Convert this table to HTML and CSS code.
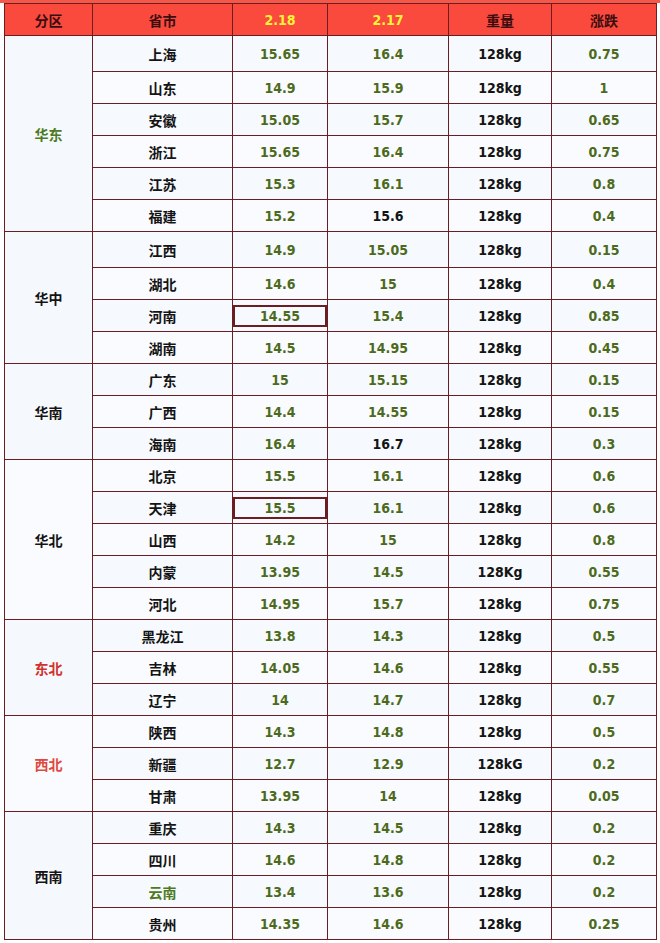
FILE: index.html
```html
<!DOCTYPE html>
<html lang="zh">
<head>
<meta charset="utf-8">
<link rel="stylesheet" href="styles.css">
</head>
<body>
<div class="topbar"></div>
<table class="price">
<colgroup>
<col class="c1"><col class="c2"><col class="c3"><col class="c4"><col class="c5"><col class="c6">
</colgroup>
<thead>
<tr class="head">
<th>分区</th><th>省市</th><th class="date">2.18</th><th class="date">2.17</th><th>重量</th><th>涨跌</th>
</tr>
</thead>
<tbody>
<tr class="tall"><td class="region green" rowspan="6">华东</td><td class="prov">上海</td><td class="num">15.65</td><td class="num">16.4</td><td class="wt">128kg</td><td class="num">0.75</td></tr>
<tr><td class="prov">山东</td><td class="num">14.9</td><td class="num">15.9</td><td class="wt">128kg</td><td class="num">1</td></tr>
<tr><td class="prov">安徽</td><td class="num">15.05</td><td class="num">15.7</td><td class="wt">128kg</td><td class="num">0.65</td></tr>
<tr><td class="prov">浙江</td><td class="num">15.65</td><td class="num">16.4</td><td class="wt">128kg</td><td class="num">0.75</td></tr>
<tr><td class="prov">江苏</td><td class="num">15.3</td><td class="num">16.1</td><td class="wt">128kg</td><td class="num">0.8</td></tr>
<tr><td class="prov">福建</td><td class="num">15.2</td><td class="wt">15.6</td><td class="wt">128kg</td><td class="num">0.4</td></tr>

<tr class="tall"><td class="region" rowspan="4">华中</td><td class="prov">江西</td><td class="num">14.9</td><td class="num">15.05</td><td class="wt">128kg</td><td class="num">0.15</td></tr>
<tr><td class="prov">湖北</td><td class="num">14.6</td><td class="num">15</td><td class="wt">128kg</td><td class="num">0.4</td></tr>
<tr><td class="prov">河南</td><td class="num boxed"><div class="box">14.55</div></td><td class="num">15.4</td><td class="wt">128kg</td><td class="num">0.85</td></tr>
<tr><td class="prov">湖南</td><td class="num">14.5</td><td class="num">14.95</td><td class="wt">128kg</td><td class="num">0.45</td></tr>

<tr><td class="region" rowspan="3">华南</td><td class="prov">广东</td><td class="num">15</td><td class="num">15.15</td><td class="wt">128kg</td><td class="num">0.15</td></tr>
<tr><td class="prov">广西</td><td class="num">14.4</td><td class="num">14.55</td><td class="wt">128kg</td><td class="num">0.15</td></tr>
<tr><td class="prov">海南</td><td class="num">16.4</td><td class="wt">16.7</td><td class="wt">128kg</td><td class="num">0.3</td></tr>

<tr><td class="region" rowspan="5">华北</td><td class="prov">北京</td><td class="num">15.5</td><td class="num">16.1</td><td class="wt">128kg</td><td class="num">0.6</td></tr>
<tr><td class="prov">天津</td><td class="num boxed"><div class="box">15.5</div></td><td class="num">16.1</td><td class="wt">128kg</td><td class="num">0.6</td></tr>
<tr><td class="prov">山西</td><td class="num">14.2</td><td class="num">15</td><td class="wt">128kg</td><td class="num">0.8</td></tr>
<tr><td class="prov">内蒙</td><td class="num">13.95</td><td class="num">14.5</td><td class="wt">128Kg</td><td class="num">0.55</td></tr>
<tr><td class="prov">河北</td><td class="num">14.95</td><td class="num">15.7</td><td class="wt">128kg</td><td class="num">0.75</td></tr>

<tr><td class="region red" rowspan="3">东北</td><td class="prov">黑龙江</td><td class="num">13.8</td><td class="num">14.3</td><td class="wt">128kg</td><td class="num">0.5</td></tr>
<tr><td class="prov">吉林</td><td class="num">14.05</td><td class="num">14.6</td><td class="wt">128kg</td><td class="num">0.55</td></tr>
<tr><td class="prov">辽宁</td><td class="num">14</td><td class="num">14.7</td><td class="wt">128kg</td><td class="num">0.7</td></tr>

<tr><td class="region red2" rowspan="3">西北</td><td class="prov">陕西</td><td class="num">14.3</td><td class="num">14.8</td><td class="wt">128kg</td><td class="num">0.5</td></tr>
<tr><td class="prov">新疆</td><td class="num">12.7</td><td class="num">12.9</td><td class="wt">128kG</td><td class="num">0.2</td></tr>
<tr><td class="prov">甘肃</td><td class="num">13.95</td><td class="num">14</td><td class="wt">128kg</td><td class="num">0.05</td></tr>

<tr><td class="region" rowspan="4">西南</td><td class="prov">重庆</td><td class="num">14.3</td><td class="num">14.5</td><td class="wt">128kg</td><td class="num">0.2</td></tr>
<tr><td class="prov">四川</td><td class="num">14.6</td><td class="num">14.8</td><td class="wt">128kg</td><td class="num">0.2</td></tr>
<tr><td class="prov green">云南</td><td class="num">13.4</td><td class="num">13.6</td><td class="wt">128kg</td><td class="num">0.2</td></tr>
<tr><td class="prov">贵州</td><td class="num">14.35</td><td class="num">14.6</td><td class="wt">128kg</td><td class="num">0.25</td></tr>
</tbody>
</table>
</body>
</html>
```
FILE: styles.css
```css
html, body {
  margin: 0;
  padding: 0;
  background: #ffffff;
}

body {
  font-family: "DejaVu Sans Condensed", "DejaVu Sans", "Noto Sans CJK SC", sans-serif;
  font-weight: bold;
  font-size: 14px;
}

.topbar {
  height: 3px;
  background: #f4584a;
}

.price {
  margin-left: 4px;
  border-collapse: collapse;
  table-layout: fixed;
  width: 653px;
}

.c1 { width: 88px; }
.c2 { width: 140px; }
.c3 { width: 95px; }
.c4 { width: 121px; }
.c5 { width: 103px; }
.c6 { width: 105px; }

.price th,
.price td {
  border: 1px solid #6a1e22;
  padding: 0;
  text-align: center;
  vertical-align: middle;
}

.head th {
  height: 31px;
  background: #fa4a3d;
  color: #3a0d10;
  font-family: "Noto Sans CJK SC", sans-serif;
  font-weight: bold;
  font-size: 14px;
}

.head th.date {
  color: #fff23a;
  font-family: "DejaVu Sans Condensed", "DejaVu Sans", sans-serif;
  font-size: 14px;
}

.price tbody tr {
  height: 32px;
}

.price tbody tr.tall {
  height: 36px;
}

.price td {
  background: #f6f9fd;
}

.price tbody tr:nth-child(even) td {
  background: #f9fbfe;
}

.price td.region {
  background: #f5f9fd;
  color: #141414;
  font-family: "Noto Sans CJK SC", sans-serif;
}

.prov {
  color: #141414;
  font-family: "Noto Sans CJK SC", sans-serif;
}

.num {
  color: #4d6a1c;
}

.wt {
  color: #141414;
}

.price td.green,
.prov.green {
  color: #4d7a1e;
}

.price td.red {
  color: #d2302c;
}

.price td.red2 {
  color: #e0483e;
}

.boxed {
  padding: 0 0;
}

.box {
  border: 2px solid #6a1e22;
  height: 18px;
  line-height: 18px;
  margin: 1px 0;
}
```
